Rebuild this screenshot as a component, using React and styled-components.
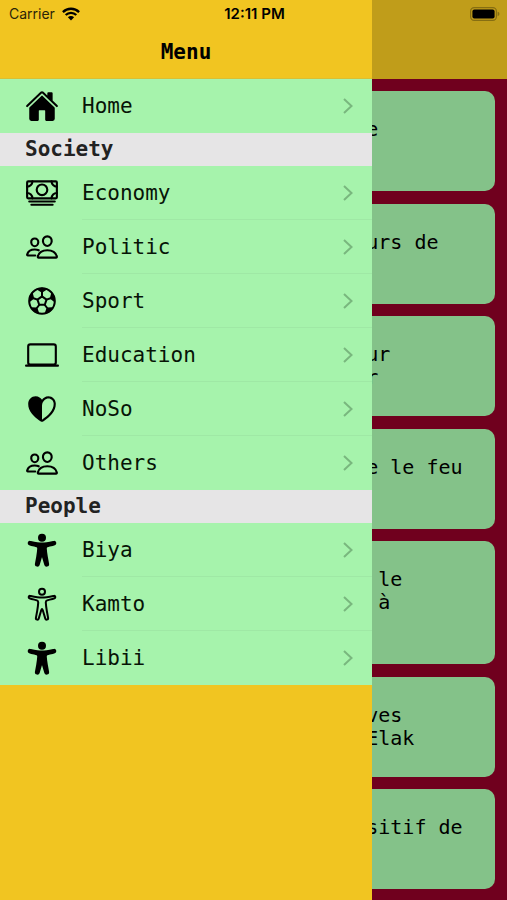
import React from "react";
import styled, { createGlobalStyle } from "styled-components";
import {
  IoHome,
  IoCashOutline,
  IoPeopleOutline,
  IoLaptopOutline,
  IoHeartHalf,
} from "react-icons/io5";

const GlobalStyle = createGlobalStyle`
  * { box-sizing: border-box; }
  body {
    margin: 0;
    font-family: "DejaVu Sans Mono", monospace;
    color: #000;
    background: #8c0026;
  }
`;

const Screen = styled.div`
  position: relative;
  min-height: 100vh;
  overflow: hidden;
`;

const StatusBar = styled.header`
  position: absolute;
  inset: 0 0 auto 0;
  z-index: 3;
  display: grid;
  grid-template-columns: 1fr auto 1fr;
  align-items: center;
  height: 27px;
  padding: 0 7px 0 9px;
  font-family: Inter, sans-serif;
  font-size: 14px;
  line-height: 20px;
`;

const Carrier = styled.div`
  display: flex;
  align-items: center;
  gap: 7px;
  color: #2b2408;
`;

const Clock = styled.time`
  font-size: 15px;
  font-weight: 600;
`;

const BatteryIcon = styled.svg`
  justify-self: end;
`;

const Page = styled.main`
  display: flex;
  flex-direction: column;
  min-height: 100vh;
`;

const PageHeader = styled.div`
  height: 79px;
  background: #f1c521;
`;

const CardList = styled.div`
  flex: 1;
  display: flex;
  flex-direction: column;
  justify-content: space-between;
  gap: 12px;
  padding: 12px 12px 11px;
`;

const Card = styled.article`
  padding: 27px 12px 27px calc(75% - 8px);
  border-radius: 10px;
  background: #a6f3ac;
`;

const Headline = styled.p`
  margin: 0;
  min-height: ${({ $lines }) => $lines * 23}px;
  font-size: 20px;
  line-height: 23px;
  white-space: pre;
`;

const Scrim = styled.div`
  position: absolute;
  inset: 0;
  z-index: 1;
  background: rgba(0, 0, 0, 0.2);
`;

const Drawer = styled.nav`
  position: absolute;
  inset: 0 135px 0 0;
  z-index: 2;
  overflow: hidden;
  background: #f1c521;
`;

const DrawerTitle = styled.h1`
  height: 79px;
  margin: 0;
  padding-top: 40px;
  border-bottom: 1px solid #d9bf35;
  font-size: 21px;
  line-height: 24px;
  text-align: center;
`;

const SectionTitle = styled.h2`
  margin: 0;
  padding: 0 25px;
  background: #e6e5e6;
  color: #222;
  font-size: 21px;
  line-height: 33px;
`;

const MenuList = styled.ul`
  margin: 0;
  padding: 0;
  list-style: none;
  background: #a6f3ac;
`;

const MenuLink = styled.a`
  display: flex;
  align-items: center;
  gap: 23px;
  height: 54px;
  padding-left: 25px;
  color: #000;
  text-decoration: none;

  > svg {
    flex: none;
    width: 34px;
    height: 34px;
  }
`;

const MenuLabel = styled.span`
  flex: 1;
  display: flex;
  align-items: center;
  justify-content: space-between;
  align-self: stretch;
  padding-right: 18px;
  border-bottom: 1px solid #9fe8a5;
  font-size: 21px;
  color: #071407;

  li:last-child & {
    border-bottom-color: transparent;
  }
`;

function PersonShape(props) {
  return (
    <svg viewBox="0 0 34 34" stroke="#000" strokeWidth="2" strokeLinejoin="round" {...props}>
      <circle cx="17" cy="4.7" r="3" />
      <path d="M5 8.9c-1.3-.2-1.8 1.9-.5 2.3 2.6.9 5.5 1.6 7.4 2.2 1.2.4 1.4 1.2 1.3 2.4-.2 3.2-.6 5.700-1 8l-1.300 7.100c-.3 2 2.300 2.400 2.800.7l2.300-7.600c.4-1.200.6-2.100 1-2.100s.6.9 1 2.100l2.300 7.600c.5 1.700 3.100 1.300 2.800-.7l-1.300-7.100c-.4-2.300-.8-4.800-1-8-.1-1.200.1-2 1.300-2.400 1.900-.6 4.800-1.300 7.400-2.200 1.300-.4.8-2.500-.5-2.300-3.900.8-8 1.700-12 1.700s-8.100-.9-12-1.700z" />
    </svg>
  );
}

function Person() {
  return <PersonShape fill="#000" aria-hidden="true" />;
}

function PersonOutline() {
  return <PersonShape fill="none" aria-hidden="true" />;
}

function Football() {
  return (
    <svg viewBox="0 0 34 34" fill="none" stroke="#000" strokeWidth="2" aria-hidden="true">
      <circle cx="17" cy="17" r="12.8" />
      <path d="M17 12.4l4.5 3.2-1.7 5.2h-5.6l-1.7-5.2z" strokeLinejoin="round" />
      {[0, 72, 144, 216, 288].map((angle) => (
        <g key={angle} transform={`rotate(${angle} 17 17)`}>
          <path d="M17 12.4V8" />
          <path d="M12.9 5.3L17 8l4.1-2.7L17 4.2z" fill="#000" strokeWidth="1.4" />
        </g>
      ))}
    </svg>
  );
}

const sections = [
  { items: [["Home", IoHome]] },
  {
    title: "Society",
    items: [
      ["Economy", IoCashOutline],
      ["Politic", IoPeopleOutline],
      ["Sport", Football],
      ["Education", IoLaptopOutline],
      ["NoSo", IoHeartHalf],
      ["Others", IoPeopleOutline],
    ],
  },
  {
    title: "People",
    items: [
      ["Biya", Person],
      ["Kamto", PersonOutline],
      ["Libii", Person],
    ],
  },
];

const articles = [
  { text: "e" },
  { text: "urs de" },
  { text: "ur\nr" },
  { text: "e le feu" },
  { text: " le\n à", lines: 3 },
  { text: "ves\nElak" },
  { text: "sitif de" },
];

function Wifi() {
  return (
    <svg width="18" height="14" viewBox="0 0 18 14" aria-hidden="true">
      <g fill="none" stroke="#000" strokeWidth="2.3">
        <path d="M0.9 5.1a11.5 11.5 0 0 1 16.2 0" />
        <path d="M3.7 8a7.5 7.5 0 0 1 10.6 0" />
      </g>
      <path d="M5.9 10.3a4.4 4.4 0 0 1 6.2 0L9 13.5z" />
    </svg>
  );
}

function Battery() {
  return (
    <BatteryIcon width="30" height="14" viewBox="0 0 30 14" aria-hidden="true">
      <rect x="0.6" y="0.6" width="25.8" height="12.8" rx="3.6" fill="none" stroke="#866e12" strokeWidth="1.2" />
      <rect x="2.4" y="2.4" width="22.2" height="9.2" rx="2" />
      <path d="M27.6 4.8c2.4.6 2.4 3.8 0 4.4z" fill="#866e12" />
    </BatteryIcon>
  );
}

function Chevron() {
  return (
    <svg width="12" height="18" viewBox="0 0 12 18" aria-hidden="true">
      <path d="M2 2l7.5 7L2 16" fill="none" stroke="#79b77e" strokeWidth="2" />
    </svg>
  );
}

export default function App() {
  return (
    <Screen>
      <GlobalStyle />
      <StatusBar>
        <Carrier>
          Carrier
          <Wifi />
        </Carrier>
        <Clock>12:11 PM</Clock>
        <Battery />
      </StatusBar>
      <Page>
        <PageHeader />
        <CardList>
          {articles.map(({ text, lines = 2 }) => (
            <Card key={text}>
              <Headline $lines={lines}>{text}</Headline>
            </Card>
          ))}
        </CardList>
      </Page>
      <Scrim />
      <Drawer aria-label="Menu">
        <DrawerTitle>Menu</DrawerTitle>
        {sections.map(({ title, items }) => (
          <React.Fragment key={title || "top"}>
            {title && <SectionTitle>{title}</SectionTitle>}
            <MenuList>
              {items.map(([label, Icon]) => (
                <li key={label}>
                  <MenuLink href={`#${label.toLowerCase()}`}>
                    <Icon aria-hidden="true" />
                    <MenuLabel>
                      {label}
                      <Chevron />
                    </MenuLabel>
                  </MenuLink>
                </li>
              ))}
            </MenuList>
          </React.Fragment>
        ))}
      </Drawer>
    </Screen>
  );
}
